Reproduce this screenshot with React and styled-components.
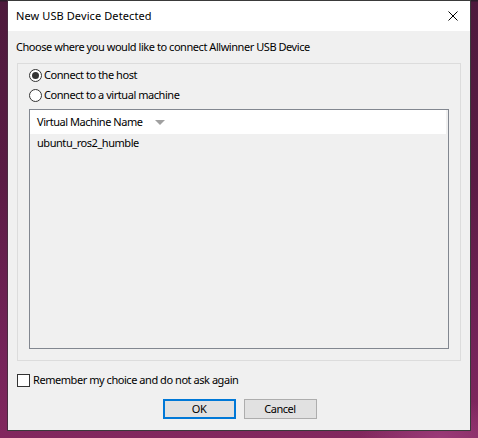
import styled, { createGlobalStyle } from "styled-components";

const GlobalStyle = createGlobalStyle`
  html, body {
    margin: 0;
    padding: 0;
  }
  body {
    width: 478px;
    height: 438px;
    overflow: hidden;
    font-family: "Noto Sans", "Liberation Sans", sans-serif;
    font-size: 11px;
    letter-spacing: -0.45px;
    color: #000;
    background:
      radial-gradient(ellipse 80px 40px at 440px 438px, #9a3a78 0%, rgba(154, 58, 120, 0) 100%),
      linear-gradient(180deg, #2c1c2a 0px, #2c1c2a 1px, #4e1a3c 2px, #5a1c44 180px, #76245a 360px, #82285e 438px);
  }
`;

export default function App() {
  return (
    <>
      <GlobalStyle />
      <Desktop>
        <Window>
          <TitleBar>
            <Title>New USB Device Detected</Title>
            <CloseButton aria-label="Close">
              <svg width="10" height="10" viewBox="0 0 10 10">
                <path d="M0.5 0.5 L9.5 9.5 M9.5 0.5 L0.5 9.5" stroke="#000" strokeWidth="1" />
              </svg>
            </CloseButton>
          </TitleBar>

          <Body>
            <Prompt>Choose where you would like to connect Allwinner USB Device</Prompt>

            <GroupBox>
              <OptionRow>
                <Radio $checked />
                <span>Connect to the host</span>
              </OptionRow>
              <OptionRow>
                <Radio />
                <span>Connect to a virtual machine</span>
              </OptionRow>

              <ListView>
                <ListHeader>
                  <HeaderCell>
                    Virtual Machine Name
                    <SortArrow />
                  </HeaderCell>
                </ListHeader>
                <ListRow>ubuntu_ros2_humble</ListRow>
              </ListView>
            </GroupBox>

            <CheckRow>
              <CheckBox />
              <span>Remember my choice and do not ask again</span>
            </CheckRow>

            <ButtonBar>
              <Button $default>OK</Button>
              <Button>Cancel</Button>
            </ButtonBar>
          </Body>
        </Window>
      </Desktop>
    </>
  );
}

const Desktop = styled.div`
  padding-left: 7px;
`;

const Window = styled.div`
  width: 464px;
  height: 431px;
  box-sizing: border-box;
  border: 1px solid #3a3a3a;
  border-left-color: #4a2a40;
  background: #f0f0f0;
  display: flex;
  flex-direction: column;
`;

const TitleBar = styled.div`
  height: 30px;
  background: #fff;
  display: flex;
  align-items: center;
  justify-content: space-between;
  padding: 0 9px 0 8px;
`;

const Title = styled.div`
  line-height: 16px;
  letter-spacing: 0.1px;
`;

const CloseButton = styled.div`
  width: 12px;
  height: 12px;
  display: flex;
  align-items: center;
  justify-content: center;
  margin-right: 2px;
`;

const Body = styled.div`
  flex: 1;
  padding: 8px 9px 0 9px;
  display: flex;
  flex-direction: column;
`;

const Prompt = styled.div`
  line-height: 16px;
  height: 16px;
  margin-left: -1px;
`;

const GroupBox = styled.div`
  margin-top: 8px;
  height: 298px;
  box-sizing: border-box;
  border: 1px solid #dcdcdc;
  padding: 1px 11px 0 11px;
  display: flex;
  flex-direction: column;
`;

const OptionRow = styled.div`
  height: 20px;
  display: flex;
  align-items: center;
  gap: 2px;
  line-height: 16px;
`;

const Radio = styled.span`
  width: 13px;
  height: 13px;
  box-sizing: border-box;
  border-radius: 50%;
  border: 1px solid #333;
  background: #fff;
  display: flex;
  align-items: center;
  justify-content: center;
  flex-shrink: 0;

  &::after {
    content: "";
    width: 7px;
    height: 7px;
    border-radius: 50%;
    background: ${(p) => (p.$checked ? "#333" : "transparent")};
  }
`;

const ListView = styled.div`
  margin-top: 4px;
  height: 240px;
  box-sizing: border-box;
  border: 1px solid #828790;
  background: #f0f0f0;
  padding-right: 2px;
`;

const ListHeader = styled.div`
  height: 24px;
  background: #fff;
  display: flex;
  align-items: center;
`;

const HeaderCell = styled.div`
  padding-left: 7px;
  display: flex;
  align-items: center;
  line-height: 16px;
`;

const SortArrow = styled.span`
  margin-left: 12px;
  width: 0;
  height: 0;
  border-left: 5.5px solid transparent;
  border-right: 5.5px solid transparent;
  border-top: 5px solid #a0a0a0;
`;

const ListRow = styled.div`
  height: 17px;
  line-height: 17px;
  padding-left: 7px;
`;

const CheckRow = styled.div`
  margin-top: 11px;
  height: 16px;
  display: flex;
  align-items: center;
  gap: 3px;
  line-height: 16px;
`;

const CheckBox = styled.span`
  width: 13px;
  height: 13px;
  box-sizing: border-box;
  border: 1px solid #333;
  background: #fff;
  flex-shrink: 0;
`;

const ButtonBar = styled.div`
  margin-top: 11px;
  display: flex;
  justify-content: center;
  gap: 8px;
  padding-left: 1px;
`;

const Button = styled.div`
  width: 73px;
  height: 20px;
  box-sizing: border-box;
  background: #e1e1e1;
  border: ${(p) => (p.$default ? "2px solid #0078d7" : "1px solid #adadad")};
  display: flex;
  align-items: center;
  justify-content: center;
  line-height: 16px;
`;
